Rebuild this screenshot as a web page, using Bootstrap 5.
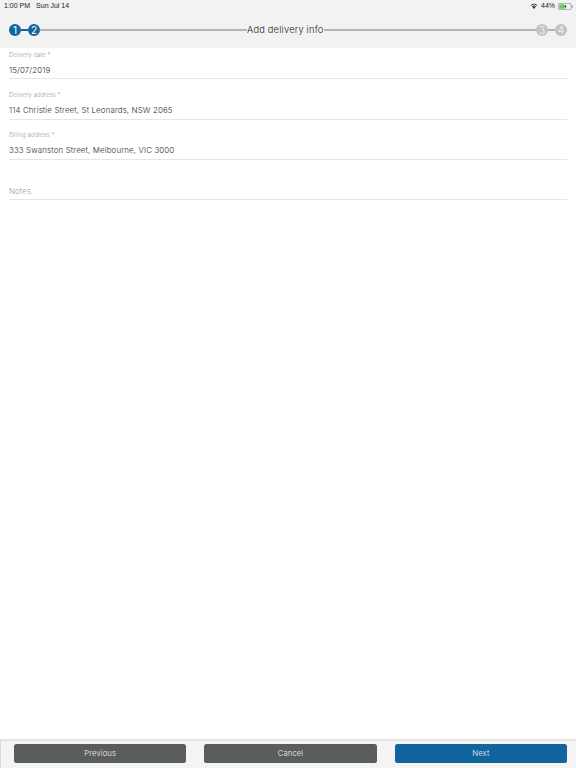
<!DOCTYPE html>
<html lang="en">
<head>
<meta charset="utf-8">
<title>Add delivery info</title>
<link href="https://cdn.jsdelivr.net/npm/bootstrap@5.3.0/dist/css/bootstrap.min.css" rel="stylesheet">
<style>
html,body{height:100%}
body{width:576px;height:768px;overflow:hidden;background:#fff;font-family:"Inter","Noto Sans",sans-serif;color:#3c3c3c}
.app-top{height:48px;background:#f2f2f2;flex:none}
.status-row{height:12px;padding:0 3px 0 4px;font-family:"Liberation Sans",sans-serif;font-size:7px;line-height:12px;color:#222}
.clock-group{gap:6px}
.sys-group{gap:3px}
.step-row{height:36px;padding:0 9px}
.step-dot{width:12px;height:12px;border-radius:50%;flex:none;font-family:"Inter",sans-serif;font-size:10px;font-weight:400;line-height:12px;text-align:center;color:#fff}
.step-on{background:#10659f}
.step-off{background:#c2c2c2;color:#eee}
.step-line{height:2px;background:#b5b5b5;flex:1 1 0}
.step-lead{flex:0 0 207px}
.step-short{flex:0 0 7px}
.step-short-on{background:#10659f}
.step-title{font-size:9.300px;font-weight:300;letter-spacing:.2px;color:#222;white-space:nowrap;line-height:12px}
.form-zone{flex:1 1 auto;padding:0 9px}
.field-box{height:32px;border-bottom:1px solid #e6e6e6;margin-bottom:8px}
.field-box:first-child{height:31px;margin-bottom:9px}
.field-label{font-size:5.800px;font-weight:300;letter-spacing:.1px;color:#999;line-height:8px;padding-top:2.500px;height:10.500px}
.field-val{font-size:7.900px;font-weight:300;letter-spacing:.14px;color:#2e2e2e;line-height:11px;margin-top:6px}
.field-hint{font-size:7.900px;font-weight:300;letter-spacing:.1px;color:#999;line-height:11px;margin-top:7px}
.foot-bar{height:29px;flex:none;background:#f4f4f4;border-top:2px solid #e4e4e4;border-left:1px solid #d8d8d8;padding:3px 9px 0 13px;gap:18px}
.foot-btn{flex:1 1 0;height:19px;padding:0;border:0;border-radius:2.500px;font-size:7.700px;font-weight:300;letter-spacing:.1px;line-height:19px;color:#f2f2f2}
.foot-btn.btn:hover{color:#f2f2f2}
.btn-grey,.btn-grey:hover{background:#5a5d5d}
.btn-blue,.btn-blue:hover{background:#10659f}
</style>
</head>
<body class="d-flex flex-column">
<header class="app-top">
  <div class="status-row d-flex justify-content-between align-items-center">
    <div class="d-flex clock-group"><span>1:00 PM</span><span>Sun Jul 14</span></div>
    <div class="d-flex align-items-center sys-group">
      <svg width="8" height="6" viewBox="0 0 18 14" aria-hidden="true"><path d="M9 14 5.800 10.200a4.800 4.800 0 0 1 6.400 0Z" fill="#222"/><path d="M3.900 8a7.900 7.900 0 0 1 10.200 0l-1.300 1.500a5.900 5.900 0 0 0-7.600 0Z" fill="#222"/><path d="M1.300 5a11.800 11.800 0 0 1 15.400 0l-1.300 1.500a9.800 9.800 0 0 0-12.800 0Z" fill="#222"/></svg>
      <span>44%</span>
      <svg width="15" height="7" viewBox="0 0 30 14" aria-hidden="true"><rect x=".7" y=".7" width="25.600" height="12.600" rx="3" fill="none" stroke="#777" stroke-width="1.200"/><rect x="2.500" y="2.500" width="11" height="9" rx="1.200" fill="#5fd35f"/><path d="M28 5v4c1.200-.3 1.800-1 1.800-2s-.6-1.700-1.800-2Z" fill="#777"/><path d="M15.500 2.500 12.500 7.600h2.400l-1 3.900 3.500-5.400H15Z" fill="#222"/></svg>
    </div>
  </div>
  <div class="step-row d-flex align-items-center">
    <span class="step-dot step-on">1</span>
    <span class="step-line step-short step-short-on"></span>
    <span class="step-dot step-on">2</span>
    <span class="step-line step-lead"></span>
    <span class="step-title">Add delivery info</span>
    <span class="step-line"></span>
    <span class="step-dot step-off">3</span>
    <span class="step-line step-short"></span>
    <span class="step-dot step-off">4</span>
  </div>
</header>
<main class="form-zone">
  <div class="field-box"><div class="field-label">Delivery date *</div><div class="field-val">15/07/2019</div></div>
  <div class="field-box"><div class="field-label">Delivery address *</div><div class="field-val">114 Christie Street, St Leonards, NSW 2065</div></div>
  <div class="field-box"><div class="field-label">Billing address *</div><div class="field-val">333 Swanston Street, Melbourne, VIC 3000</div></div>
  <div class="field-box"><div class="field-label"></div><div class="field-hint">Notes</div></div>
</main>
<footer class="foot-bar d-flex">
  <button type="button" class="btn foot-btn btn-grey">Previous</button>
  <button type="button" class="btn foot-btn btn-grey">Cancel</button>
  <button type="button" class="btn foot-btn btn-blue">Next</button>
</footer>
<script src="https://cdn.jsdelivr.net/npm/bootstrap@5.3.0/dist/js/bootstrap.bundle.min.js"></script>
</body>
</html>
